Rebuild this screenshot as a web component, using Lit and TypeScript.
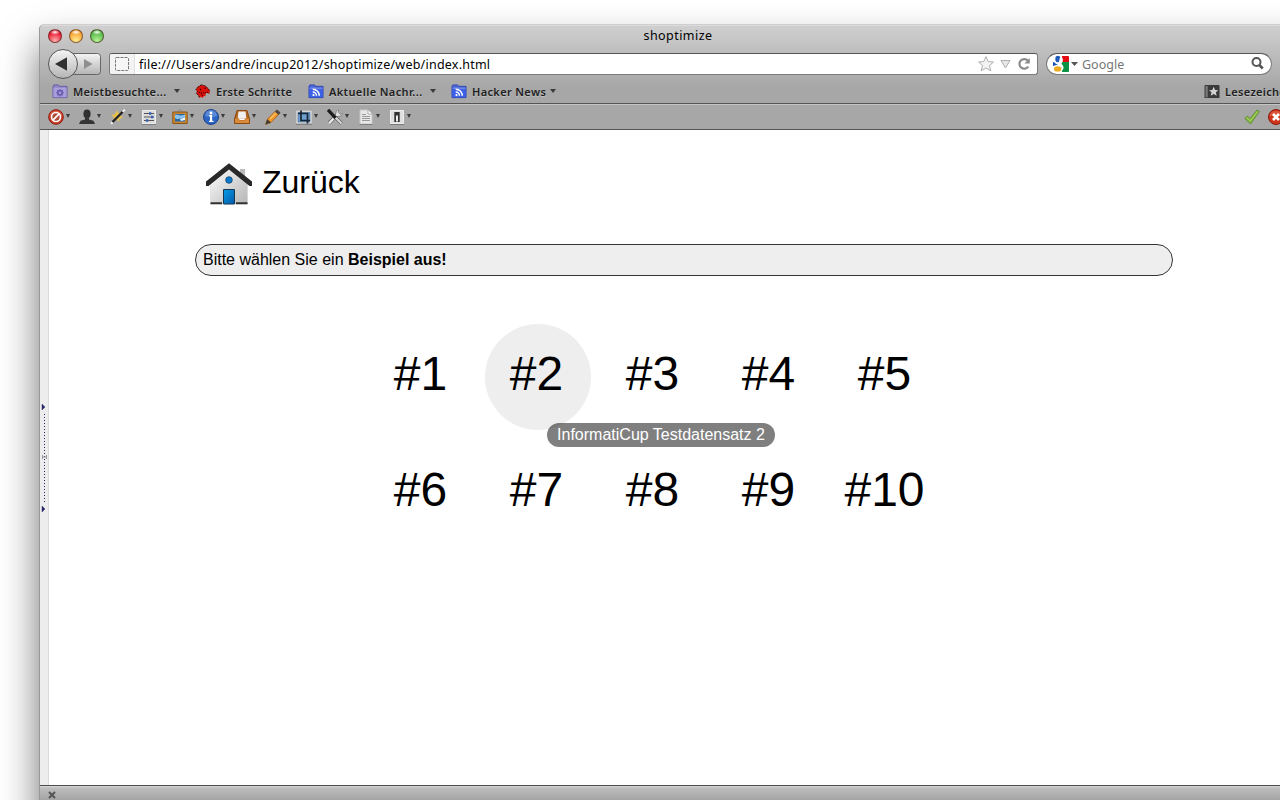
import { LitElement, html, css, svg } from "lit";
import { customElement, property } from "lit/decorators.js";

const folder = (inner: unknown, c1: string, c2: string, edge: string) => svg`
  <path d="M.5 2.5 1.5 1h5l1 1.5h8v12H.5z" fill="${c1}" stroke="${edge}"/>
  <path d="M1 5h14v9H1z" fill="${c2}"/><path d="M1 4.5h14" stroke="#fff" stroke-opacity=".35"/>${inner}`;

const rss = svg`<g fill="none" stroke="#fff" stroke-width="1.6"><path d="M4.5 8.5a4 4 0 0 1 4 4M4.5 5.5a7 7 0 0 1 7 7"/></g><circle cx="5.3" cy="11.8" r="1.2" fill="#fff"/>`;

const icons: Record<string, unknown> = {
  smart: folder(
    svg`<circle cx="8" cy="9.3" r="2.3" fill="none" stroke="#6a5cae" stroke-width="1.8"/><path d="M8 5.300v1.500M8 11.800v1.500M4 9.300h1.500M10.500 9.300H12M5.200 6.500l1 1M9.800 11.100l1 1M10.800 6.500l-1 1M6.200 11.100l-1 1" stroke="#6a5cae" stroke-width="1.3"/>`,
    "#8f83c6", "#a79ddb", "#675aa5"),
  feed: folder(rss, "#4b68d8", "#3c60e8", "#2b43b4"),
  dino: svg`<path d="M2 3.500 6 1l4 .8 2.500 2 3 3.700-.8 2.500-2.700-.5-1.500 1 .5 2.500-2-.5-1 2.500-2.500-1.500-1 1.500-1.500-3L.8 10 2 8 .5 6z" fill="#dc1109"/><path d="M6 1 2 3.500.5 6 2 8 .8 10l2.200 2 1.500 3M6 1l4 .8 2.500 2 3 3.700M6 9l1.500 4M8 9l2 1 2-1.500 2.700 1.500" stroke="#2a0000" stroke-width="1" stroke-dasharray="1.500 .8" fill="none"/><path d="M9.500 4.500h1.800M5 5l1 2M3.500 8.500l1.500 1" stroke="#200" stroke-width="1"/>`,
  block: svg`<circle cx="8" cy="8" r="7.300" fill="#cc3a22" stroke="#8e1d10"/><path d="M1.500 7a6.600 6.200 0 0 1 13 0z" fill="#e77a62" opacity=".6"/><circle cx="8" cy="8" r="4.500" fill="#b04a3a" stroke="#fff" stroke-width="1.600"/><path d="m4.900 11.100 6.200-6.200" stroke="#fff" stroke-width="1.800"/>`,
  person: svg`<ellipse cx="8" cy="4.900" rx="3.600" ry="4.300" fill="#303030"/><path d="M6 8h4v2.500l4.500 1.200L16 15H0l1.500-3.300L6 10.500z" fill="#353535"/>`,
  wand: svg`<path d="m7 1 1.300 3.300L12 3l-1.500 3.600L13 9l-3.500.5L9 13 6.500 10.500 3 12l1-3.500L1 6l3.800-.7z" fill="#f1c53e" opacity=".85"/><path d="M1 14.500 14.500 1" stroke="#202020" stroke-width="2.300"/><path d="m.8 13 1.900 1.900M12.600 2.900l2.300-2.300" stroke="#eee" stroke-width="2.300"/>`,
  sliders: svg`<path d="M1.500 1.500h13v13h-13z" fill="#dcdcdc" stroke="#ededed"/><path d="M1 15.500h14" stroke="#7e7e7e"/><path d="M3 4.500h10M3 8h10M3 11.500h10" stroke="#555" stroke-width="1.200"/><path d="M8 3.200h2.300v2.600H8zM10 6.700h2.300v2.600H10zM5 10.200h2.300v2.600H5z" fill="#305fb5"/>`,
  picture: svg`<path d="m5 3 3-2.500L11 3" fill="none" stroke="#8b8b8b"/><path d="M.8 3h14.400v11.500H.8z" fill="#c9872f" stroke="#8a541b"/><path d="M3 5h10v7.500H3z" fill="#2669a8"/><path d="M3 6c3-1 4 2 10-.5V9C9 8 7 12 3 9z" fill="#8fc2e8"/><path d="m8 10 5-1.500V11l-4 1z" fill="#e5f3fb"/>`,
  info: svg`<circle cx="8" cy="8" r="7.500" fill="#2c65c4" stroke="#1c458d"/><path d="M2 7a6 6 0 0 1 12 0q-6 2-12 0" fill="#82a9e7" opacity=".55"/><circle cx="8" cy="4" r="1.400" fill="#fff"/><path d="M6 6.700h2.500V12M6 12.300h4.500" fill="none" stroke="#fff" stroke-width="1.300"/><path d="M8 6.500V12" stroke="#fff" stroke-width="2"/>`,
  tray: svg`<path d="M3 1.500h10L15.500 10v4.500H.5V10z" fill="#b5661f" stroke="#8a4a14"/><path d="M4.500 2.500h7l.8 7H3.700z" fill="#f0f0f0"/><path d="M1 9.500h3.500l.8 2h5.400l.8-2H15V14H1z" fill="#d98a3b"/><path d="M5 9.500h6l-.5 1.500h-5z" fill="#fff"/>`,
  pencil: svg`<path d="m.5 15.500 2-5.500L11 1.500 15 4 6 13.500z" fill="#ef9428" stroke="#9b560e" stroke-width=".7"/><path d="m.5 15.500 1.700-5.200L6 13.500z" fill="#403a34"/><path d="M9.800 2.800 12 .5 15.500 3.500 13.500 5.700z" fill="#4a4745"/><path d="m5 10 6-6" stroke="#ffc56f" stroke-width="1.300"/>`,
  crop: svg`<path d="M.5 2h15v12.500H.5z" fill="#e0e0e0" stroke="#cacaca"/><path d="M0 15.300h16" stroke="#777"/><path d="M2 3.500h12v9.500H2z" fill="#6e9fce" stroke="#3d6895" stroke-width=".6"/><path d="M5 1.500V11.500H14M2 4.500h9.500v10" fill="none" stroke="#172532" stroke-width="1.700"/>`,
  tools: svg`<path d="m2 14.300 9.500-10" stroke="#555" stroke-width="3.800"/><path d="M11.500.8a3.300 3.300 0 1 0 4 3.800l-2.500.7-1.700-1.700z" fill="#e0e0e0" stroke="#666" stroke-width=".6"/><path d="m2 14.300 9.500-10" stroke="#e5e5e5" stroke-width="2.400"/><path d="m7.500 7.500 7 7" stroke="#555" stroke-width="3.400"/><path d="m8.500 8.500 6 6" stroke="#d8d8d8" stroke-width="2.200"/><path d="m1 .8 7.500 8" stroke="#1d1d1d" stroke-width="3.200"/>`,
  page: svg`<path d="M2 1h8l4 4v10H2z" fill="#e8e8e8" stroke="#c7c7c7"/><path d="M1.500 15.500h13" stroke="#808080"/><path d="M10 1v4h4" fill="#fff" stroke="#aaa"/><path d="M4 5.500h4M4 7.500h8M4 9.500h8M4 11.500h8" stroke="#999"/>`,
  toggle: svg`<path d="M1.500 1.500h13v13h-13z" fill="#dedede" stroke="#efefef"/><path d="M1 15.500h14" stroke="#777"/><path d="M5.300 3h5.400v10H5.300z" fill="#333"/><path d="M7 6.500h2v6H7z" fill="#eee"/>`,
  check: svg`<path d="M.8 9.500 3.500 7 6 9.500 13 1l2.500 1.500L6.500 15z" fill="#84b83e" stroke="#47751c" stroke-width=".6"/><path d="m3 8.700 3.200 3.300L13.700 2.500" stroke="#a9d268" fill="none"/>`,
  error: svg`<circle cx="8" cy="8" r="7.500" fill="#cf3319" stroke="#8e1d10"/><path d="M1.500 7a6.600 6.200 0 0 1 13 0z" fill="#e77a62" opacity=".5"/><path d="m5 5 6 6m0-6-6 6" stroke="#fff" stroke-width="2.700"/>`,
  marks: svg`<path d="M0 2q0-1 1-1h14q1 0 1 1v13H0z" fill="#3b3b3b"/><path d="M1 2h2.500v12H1z" fill="#777"/><path d="m9.800 3 1.500 3.300 3.500.3-2.700 2.300.9 3.600-3.200-1.900-3.200 1.900.9-3.600-2.700-2.300 3.500-.3z" fill="#d2d2d2"/>`,
  star: svg`<path d="m8 .6 2.200 5 5.300.4-4.100 3.500 1.400 5.300L8 12l-4.800 2.800 1.400-5.300L.5 6l5.300-.4z" fill="#f4f4f4" stroke="#b0b0b0"/>`,
  reload: svg`<path d="M12.300 10.500a4.800 4.800 0 1 1-.4-5.700" fill="none" stroke="#8b8b8b" stroke-width="2.200"/><path d="M13.800 2v5.500H8.400z" fill="#8b8b8b"/>`,
  lens: svg`<circle cx="6.500" cy="6" r="4" fill="none" stroke="#565656" stroke-width="2"/><path d="m9.300 9 3.500 3.500" stroke="#565656" stroke-width="2.600"/>`,
  google: svg`<path d="M0 0h16v16H0z" fill="#fff"/><path d="M9 0h6q1 0 1 1v5H9z" fill="#e60d12"/><path d="M8 6h8v9q0 1-1 1H9z" fill="#0c9243"/><path d="M0 6q3 0 5 2.500L0 10z" fill="#174fb4"/><ellipse cx="5.500" cy="4" rx="4.400" ry="4.500" fill="#fff"/><ellipse cx="4.900" cy="3" rx="2.600" ry="3.300" fill="#1e5ab8"/><path d="M8 1.500 6.500 7.500Q10 10 9.500 12T7 15.500" fill="none" stroke="#fff" stroke-width="2"/><ellipse cx="4.600" cy="12.900" rx="3.700" ry="2.700" fill="#eea91e"/>`,
  dashed: svg`<rect x="1.500" y="1.500" width="13" height="13" rx="1" fill="#f6f6f6" stroke="#777" stroke-dasharray="3 1"/>`,
};

@customElement("ui-icon")
class UiIcon extends LitElement {
  @property() name = "";
  static styles = css`
    :host { display: block; flex: none; width: 16px; height: 16px; }
    svg { display: block; width: 100%; height: 100%; overflow: visible; }
  `;
  render() {
    return html`<svg viewBox="0 0 16 16">${icons[this.name]}</svg>`;
  }
}

const tools = ["block", "person", "wand", "sliders", "picture", "info", "tray", "pencil", "crop", "tools", "page", "toggle"];

@customElement("app-root")
class AppRoot extends LitElement {
  static styles = css`
    :host { display: block; width: 1280px; height: 800px; overflow: hidden; background: #fff; font-family: "Liberation Sans", Arial, sans-serif; color: #000; }
    * { box-sizing: border-box; }
    .desk { height: 800px; overflow: hidden; padding: 24px 0 0 39px; }
    .window { width: 1300px; height: 860px; display: flex; flex-direction: column; border: 1px solid #999; border-top-color: #cfcfcf; border-radius: 5px 5px 0 0; box-shadow: 0 22px 38px rgba(0,0,0,.56); background: #a7a7a7; overflow: hidden; }
    .chrome { font-family: "Noto Sans", "Open Sans", sans-serif; height: 78px; background: linear-gradient(#e8e8e8 0, #cfcfcf 1px, #a7a7a7 62px, #a7a7a7); }
    .title { height: 23px; width: 1240px; display: grid; grid-template-columns: 1fr auto 1fr; align-items: center; padding: 0 0 2px 8px; font-size: 12.500px; }
    .title .name { letter-spacing: .45px; padding-left: 28px; }
    .lights { display: flex; gap: 7px; }
    .light { width: 14px; height: 14px; border-radius: 50%; border: 1px solid rgba(60,20,10,.55); }
    .red { background: radial-gradient(ellipse 5px 2.500px at 50% 18%, #fff 0, rgba(255,255,255,0) 100%), radial-gradient(circle at 50% 90%, #ffb0b0, #e61a30 70%, #a10e1c); }
    .amber { background: radial-gradient(ellipse 5px 2.500px at 50% 18%, #fff 0, rgba(255,255,255,0) 100%), radial-gradient(circle at 50% 90%, #fff094, #f59a2b 75%, #b55f0d); }
    .green { background: radial-gradient(ellipse 5px 2.500px at 50% 18%, #fff 0, rgba(255,255,255,0) 100%), radial-gradient(circle at 50% 90%, #b9f59a, #4cb440 75%, #1f6d1e); }
    .nav { height: 32px; width: 1240px; display: flex; align-items: center; padding-left: 8px; }
    .nav svg { display: block; flex: none; }
    .url { margin-left: 8px; width: 929px; height: 22px; display: flex; align-items: center; background: #fff; border: 1px solid #7b7b7b; border-top-color: #555; border-radius: 3px; font-size: 12.500px; }
    .ident { width: 25px; height: 20px; padding: 2px 0 0 4px; background: #f3f3f3; border-right: 1px solid #dedede; border-radius: 2px 0 0 2px; }
    .addr { flex: 1; padding-left: 4px; white-space: nowrap; letter-spacing: .23px; }
    .search { margin-left: 8px; width: 226px; height: 22px; display: flex; align-items: center; background: #fff; border: 1px solid #7b7b7b; border-top-color: #555; border-radius: 11px; padding: 0 5px 0 6px; font-size: 12.500px; color: #777; }
    .search .hint { flex: 1; padding-left: 4px; letter-spacing: 0; }
    .caret { width: 0; height: 0; border: 3px solid transparent; border-top: 4px solid #3a3a3a; border-bottom: 0; flex: none; }
    .marks { height: 23px; width: 1300px; display: flex; align-items: center; padding: 0 0 1px 12px; font-size: 11px; font-weight: 600; color: #1e1e1e; text-shadow: 0 1px rgba(255,255,255,.3); }
    .mark { display: flex; align-items: center; white-space: nowrap; flex: none; }
    .mark ui-icon { margin-right: 5px; height: 15px; }
    .label { flex: 1; }
    .tools { height: 27px; flex: none; display: flex; align-items: center; padding-left: 8px; background: #a7a7a7; border-top: 1px solid #555; border-bottom: 1px solid #555; box-shadow: inset 0 1px #c4c4c4; }
    .tool { width: 31px; display: flex; align-items: center; gap: 2px; flex: none; }
    .tool .caret { border-width: 4px 2.500px 0; margin-bottom: 1px; }
    .right { display: flex; gap: 8px; margin-left: 824px; }
    .view { display: flex; height: 655px; flex: none; background: #fff; }
    .side { width: 9px; flex: none; background: #ededed; border-right: 1px solid #d9d9d9; padding-top: 272px; }
    .side svg { display: block; }
    .page { width: 978px; margin-left: 146px; }
    .home { display: flex; height: 48px; margin: 30px 0 36px 10px; gap: 9px; font-size: 32px; line-height: 44px; }
    .banner { height: 32px; border: 1px solid #333; border-radius: 16px; background: #eee; font-size: 16px; line-height: 29px; padding-left: 7px; white-space: nowrap; }
    .grid { display: grid; grid-template-columns: repeat(5, 106px); gap: 10px; margin: 48px 0 0 174px; }
    .cell { position: relative; height: 106px; border-radius: 50%; font-size: 48px; line-height: 100px; text-align: center; padding-right: 3px; white-space: nowrap; }
    .active { background: #eee; }
    .tip { position: absolute; left: 62px; top: 99px; width: 228px; height: 24px; border-radius: 12px; background: rgba(0,0,0,.5); color: #fff; font-size: 16px; line-height: 23px; z-index: 1; }
    .status { flex: 1; border-top: 1px solid #4d4d4d; background: linear-gradient(#d8d8d8 0, #bdbdbd 2px, #a0a0a0 16px); padding: 5px 0 0 8px; }
    .status svg { display: block; }
  `;

  mark(icon: string, label: string, width: number, gap: number, spacing: string, caret = true) {
    return html`<div class="mark" style="width:${width}px;margin-right:${gap}px;letter-spacing:${spacing}">
      <ui-icon name=${icon}></ui-icon><span class="label">${label}</span>${caret ? html`<i class="caret"></i>` : ""}
    </div>`;
  }

  render() {
    return html`<div class="desk"><div class="window">
      <div class="chrome">
        <div class="title">
          <div class="lights"><i class="light red"></i><i class="light amber"></i><i class="light green"></i></div>
          <span class="name">shoptimize</span>
        </div>
        <div class="nav">
          <svg width="53" height="32" viewBox="0 0 53 32">
            <defs><linearGradient id="b" x2="0" y2="1"><stop stop-color="#f5f5f5"/><stop offset="1" stop-color="#b4b4b4"/></linearGradient></defs>
            <rect x="20" y="5.500" width="32.500" height="21" rx="3" fill="url(#b)" stroke="#666"/>
            <circle cx="15" cy="16" r="14.500" fill="url(#b)" stroke="#555"/>
            <path d="M7 16 19 9.300v13.400z" fill="#303030"/><path d="M44.500 16 36 11v10z" fill="#8f8f8f"/>
          </svg>
          <div class="url">
            <div class="ident"><ui-icon name="dashed"></ui-icon></div>
            <span class="addr">file:///Users/andre/incup2012/shoptimize/web/index.html</span>
            <ui-icon name="star"></ui-icon>
            <svg width="22" height="16"><path d="M7 4.500h9L11.500 12z" fill="#e7e7e7" stroke="#b0b0b0"/></svg>
            <ui-icon name="reload"></ui-icon>
            <svg width="5" height="10"></svg>
          </div>
          <div class="search"><ui-icon name="google"></ui-icon><svg width="9" height="8"><path d="M2 2h7L5.500 6z" fill="#555"/></svg><span class="hint">Google</span><ui-icon name="lens"></ui-icon></div>
        </div>
        <div class="marks">
          ${this.mark("smart", "Meistbesuchte...", 128, 15, ".35px")}
          ${this.mark("dino", "Erste Schritte", 98, 15, ".3px", false)}
          ${this.mark("feed", "Aktuelle Nachr...", 128, 15, ".38px")}
          ${this.mark("feed", "Hacker News", 105, 648, ".35px")}
          ${this.mark("marks", "Lesezeichen", 100, 0, ".3px", false)}
        </div>
      </div>
      <div class="tools">
        ${tools.map((t) => html`<div class="tool"><ui-icon name=${t}></ui-icon><i class="caret"></i></div>`)}
        <div class="right"><ui-icon name="check"></ui-icon><ui-icon name="error"></ui-icon></div>
      </div>
      <div class="view">
        <div class="side"><svg width="8" height="112" viewBox="0 0 8 112">
          <path d="M2 2v6l3-3zM2 104v6l3-3z" fill="#26266a" stroke="#26266a" stroke-width=".4"/>
          <path d="M4.500 12v90" stroke="#26266a" stroke-dasharray="1 2"/><path d="M2.500 53v4M6.500 53v4M2.500 55h4" stroke="#999"/>
        </svg></div>
        <div class="page">
          <div class="home">
            <svg width="48" height="48" viewBox="0 0 48 48">
              <defs><linearGradient id="w" x2="1" y2="1"><stop stop-color="#fff"/><stop offset="1" stop-color="#b5b5b5"/></linearGradient>
              <linearGradient id="d" x2="1" y2="1"><stop stop-color="#079de8"/><stop offset="1" stop-color="#0458a8"/></linearGradient></defs>
              <path d="M35 9h5v12h-5z" fill="#bbb"/>
              <path d="M5.500 22 24 6.500 42.500 22v22h-37z" fill="url(#w)" stroke="#d0d0d0" stroke-width=".5"/>
              <path d="M5.500 42.300H17v2H5.500zM31 42.300h11.500v2H31z" fill="#333"/>
              <path d="M18.500 29.500h11V44h-11z" fill="url(#d)" stroke="#173852"/>
              <circle cx="24" cy="20" r="3.300" fill="#087bd1" stroke="#184464" stroke-width=".8"/>
              <path d="M1 21.500 24 3.300l23 18.200V26h-2.500L24 9.500 3.500 26H1z" fill="#292929"/>
            </svg>
            <span>Zurück</span>
          </div>
          <div class="banner">Bitte wählen Sie ein <b>Beispiel aus!</b></div>
          <div class="grid">
            ${[1, 2, 3, 4, 5, 6, 7, 8, 9, 10].map((n) => html`<div class="cell ${n === 2 ? "active" : ""}">#${n}${n === 2 ? html`<span class="tip">InformatiCup Testdatensatz 2</span>` : ""}</div>`)}
          </div>
        </div>
      </div>
      <div class="status"><svg width="8" height="8"><path d="m1 1 6 6m0-6-6 6" stroke="#555" stroke-width="2"/></svg></div>
    </div></div>`;
  }
}
